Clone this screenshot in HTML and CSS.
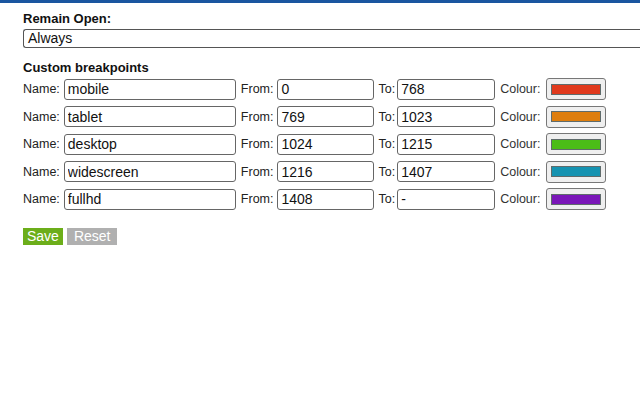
FILE: index.html
```html
<!DOCTYPE html>
<html>
<head>
<meta charset="utf-8">
<link rel="stylesheet" href="styles.css">
</head>
<body>
<div class="topbar"></div>
<div class="page">
  <div class="heading">Remain Open:</div>
  <div class="select">Always</div>
  <div class="heading heading2">Custom breakpoints</div>
  <div class="rows">
    <div class="row">
      <span class="lbl">Name:</span><input class="inp name" value="mobile">
      <span class="lbl">From:</span><input class="inp num from" value="0">
      <span class="lbl lbl-to">To:</span><input class="inp num" value="768">
      <span class="lbl lbl-colour">Colour:</span><span class="colour"><span class="swatch red"></span></span>
    </div>
    <div class="row">
      <span class="lbl">Name:</span><input class="inp name" value="tablet">
      <span class="lbl">From:</span><input class="inp num from" value="769">
      <span class="lbl lbl-to">To:</span><input class="inp num" value="1023">
      <span class="lbl lbl-colour">Colour:</span><span class="colour"><span class="swatch orange"></span></span>
    </div>
    <div class="row">
      <span class="lbl">Name:</span><input class="inp name" value="desktop">
      <span class="lbl">From:</span><input class="inp num from" value="1024">
      <span class="lbl lbl-to">To:</span><input class="inp num" value="1215">
      <span class="lbl lbl-colour">Colour:</span><span class="colour"><span class="swatch green"></span></span>
    </div>
    <div class="row">
      <span class="lbl">Name:</span><input class="inp name" value="widescreen">
      <span class="lbl">From:</span><input class="inp num from" value="1216">
      <span class="lbl lbl-to">To:</span><input class="inp num" value="1407">
      <span class="lbl lbl-colour">Colour:</span><span class="colour"><span class="swatch teal"></span></span>
    </div>
    <div class="row">
      <span class="lbl">Name:</span><input class="inp name" value="fullhd">
      <span class="lbl">From:</span><input class="inp num from" value="1408">
      <span class="lbl lbl-to">To:</span><input class="inp num" value="-">
      <span class="lbl lbl-colour">Colour:</span><span class="colour"><span class="swatch purple"></span></span>
    </div>
  </div>
  <div class="buttons">
    <span class="btn save">Save</span><span class="btn reset">Reset</span>
  </div>
</div>
</body>
</html>
```
FILE: styles.css
```css
html, body {
  margin: 0;
  padding: 0;
  background: #fff;
}
body {
  font-family: "Liberation Sans", Arial, sans-serif;
  color: #111;
  font-size: 13px;
}
.topbar {
  height: 3px;
  background: #1a56a0;
}
.page {
  padding: 8px 0 0 23px;
}
.heading {
  font-weight: bold;
  font-size: 13px;
  line-height: 15px;
}
.heading2 {
  margin-top: 12px;
}
.select {
  margin-top: 3px;
  height: 17px;
  border: 1px solid #555;
  border-right: none;
  border-radius: 3px 0 0 3px;
  font-size: 14px;
  line-height: 17px;
  padding-left: 4px;
  color: #111;
}
.rows {
  margin-top: 3px;
  display: flex;
  flex-direction: column;
  gap: 5.5px;
}
.row {
  display: flex;
  align-items: center;
  height: 22px;
}
.lbl {
  font-size: 12.5px;
  color: #222;
  margin-right: 4px;
}
.lbl-to {
  margin-right: 2px;
}
.lbl-colour {
  color: #333;
  margin-right: 6px;
}
.inp {
  box-sizing: border-box;
  height: 21px;
  border: 1px solid #666;
  border-radius: 3px;
  font-family: "Liberation Sans", Arial, sans-serif;
  font-size: 14px;
  padding: 0 3px;
  margin: 0 5px 0 0;
  color: #111;
  background: #fff;
}
.name { width: 172px; }
.num { width: 98px; }
.from { width: 97px; margin-right: 4px; }
.colour {
  box-sizing: border-box;
  width: 60px;
  height: 22px;
  border: 1px solid #777;
  border-radius: 3px;
  background: #efefef;
  display: flex;
  align-items: center;
  justify-content: center;
}
.swatch {
  box-sizing: border-box;
  width: 50px;
  height: 11px;
  border: 1px solid #5f6b6b;
}
.red { background: #e0391c; }
.orange { background: #de7e0e; }
.green { background: #4bbd17; }
.teal { background: #1593b1; }
.purple { background: #7a16b8; }
.buttons {
  margin-top: 18px;
  display: flex;
  gap: 4px;
}
.btn {
  color: #fff;
  font-size: 14px;
  line-height: 17px;
  padding: 0 4px;
}
.save { background: #6cae1a; }
.reset { background: #b0b0b0; padding: 0 6px 0 7px; }
```
